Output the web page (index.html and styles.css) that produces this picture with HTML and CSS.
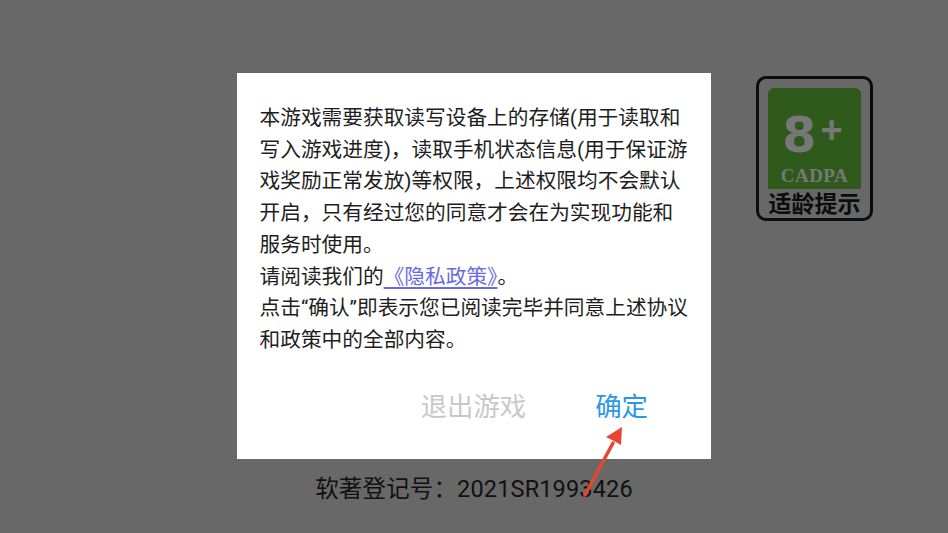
FILE: index.html
```html
<!DOCTYPE html>
<html lang="zh-CN">
<head>
  <meta charset="UTF-8">
  <meta name="viewport" content="width=device-width, initial-scale=1.0">
  <title>隐私提示</title>
  <link rel="stylesheet" href="styles.css">
</head>
<body>
  <div class="screen">
    <div class="dialog">
      <div class="dialog_text">
        <p>本游戏需要获取读写设备上的存储(用于读取和写入游戏进度)，读取手机状态信息(用于保证游戏奖励正常发放)等权限，上述权限均不会默认开启，只有经过您的同意才会在为实现功能和服务时使用。</p>
        <p>请阅读我们的<a class="policy_link" href="#">《隐私政策》</a>。</p>
        <p>点击“确认”即表示您已阅读完毕并同意上述协议和政策中的全部内容。</p>
      </div>
      <div class="dialog_btns">
        <span class="btn_exit">退出游戏</span>
        <span class="btn_ok">确定</span>
      </div>
    </div>
    <div class="copyright">软著登记号：2021SR1993426</div>

    <div class="age_badge">
      <div class="age_green">
        <div class="age_num">8<span class="age_plus">+</span></div>
        <div class="age_org">CADPA</div>
      </div>
      <div class="age_label">适龄提示</div>
    </div>

    <svg class="arrow" width="60" height="80" viewBox="0 0 60 80">
      <path d="M5 75 L33 23" stroke="#e8452f" stroke-width="3.5" stroke-linecap="round" fill="none"/>
      <path d="M42 7 L41 25 L34 21 L26 17 Z" fill="#e8452f"/>
    </svg>
  </div>
</body>
</html>
```

FILE: styles.css
```css
*{
  margin: 0;
  padding: 0;
  box-sizing: border-box;
}

html, body{
  height: 100%;
  overflow: hidden;
}

body{
  font-family: Roboto, "Noto Sans CJK SC", sans-serif;
}

.screen{
  position: relative;
  display: flex;
  flex-direction: column;
  align-items: center;
  height: 100%;
  padding-top: 73px;
  background-color: #686868;
}

.dialog{
  width: 474px;
  height: 386px;
  padding: 30px 20px 0 22.5px;
  background-color: #fff;
}

.dialog_text{
  height: 283px;
  font-size: 20.7px;
  line-height: 31.7px;
  color: #1e1e1e;
}

.policy_link{
  color: #6a6ae0;
  text-decoration: underline;
  text-underline-offset: 3px;
}

.dialog_btns{
  display: flex;
  justify-content: flex-end;
  gap: 69px;
  padding-right: 43px;
  padding-top: 1px;
  font-size: 26.4px;
  line-height: 40px;
}

.btn_exit{
  color: #c8c8c8;
}

.btn_ok{
  color: #2b97e6;
}

.copyright{
  margin-top: 13px;
  font-size: 23.5px;
  line-height: 34px;
  letter-spacing: 0.15px;
  color: #111;
}

.age_badge{
  position: absolute;
  left: 756px;
  top: 76px;
  width: 117px;
  height: 145px;
  padding: 9px 9px 0;
  border: 3px solid #0c0c0c;
  border-radius: 10px;
}

.age_green{
  height: 101px;
  border-radius: 6px 6px 0 0;
  background-color: #2f5a1b;
  color: #777;
  text-align: center;
}

.age_num{
  height: 76px;
  padding-top: 23px;
  padding-right: 4px;
  font-family: "DejaVu Sans", sans-serif;
  font-weight: bold;
  font-size: 49px;
  line-height: 49px;
}

.age_plus{
  position: relative;
  top: -9px;
  margin-left: 4px;
  font-family: "Liberation Sans", sans-serif;
  font-size: 38px;
}

.age_org{
  font-family: "Liberation Serif", serif;
  font-weight: bold;
  font-size: 19px;
  line-height: 24px;
  letter-spacing: 0.5px;
}

.age_label{
  margin-top: 2px;
  font-size: 23px;
  line-height: 27px;
  font-weight: bold;
  white-space: nowrap;
  color: #0c0c0c;
  text-align: center;
}

.arrow{
  position: absolute;
  left: 580px;
  top: 420px;
}
```
